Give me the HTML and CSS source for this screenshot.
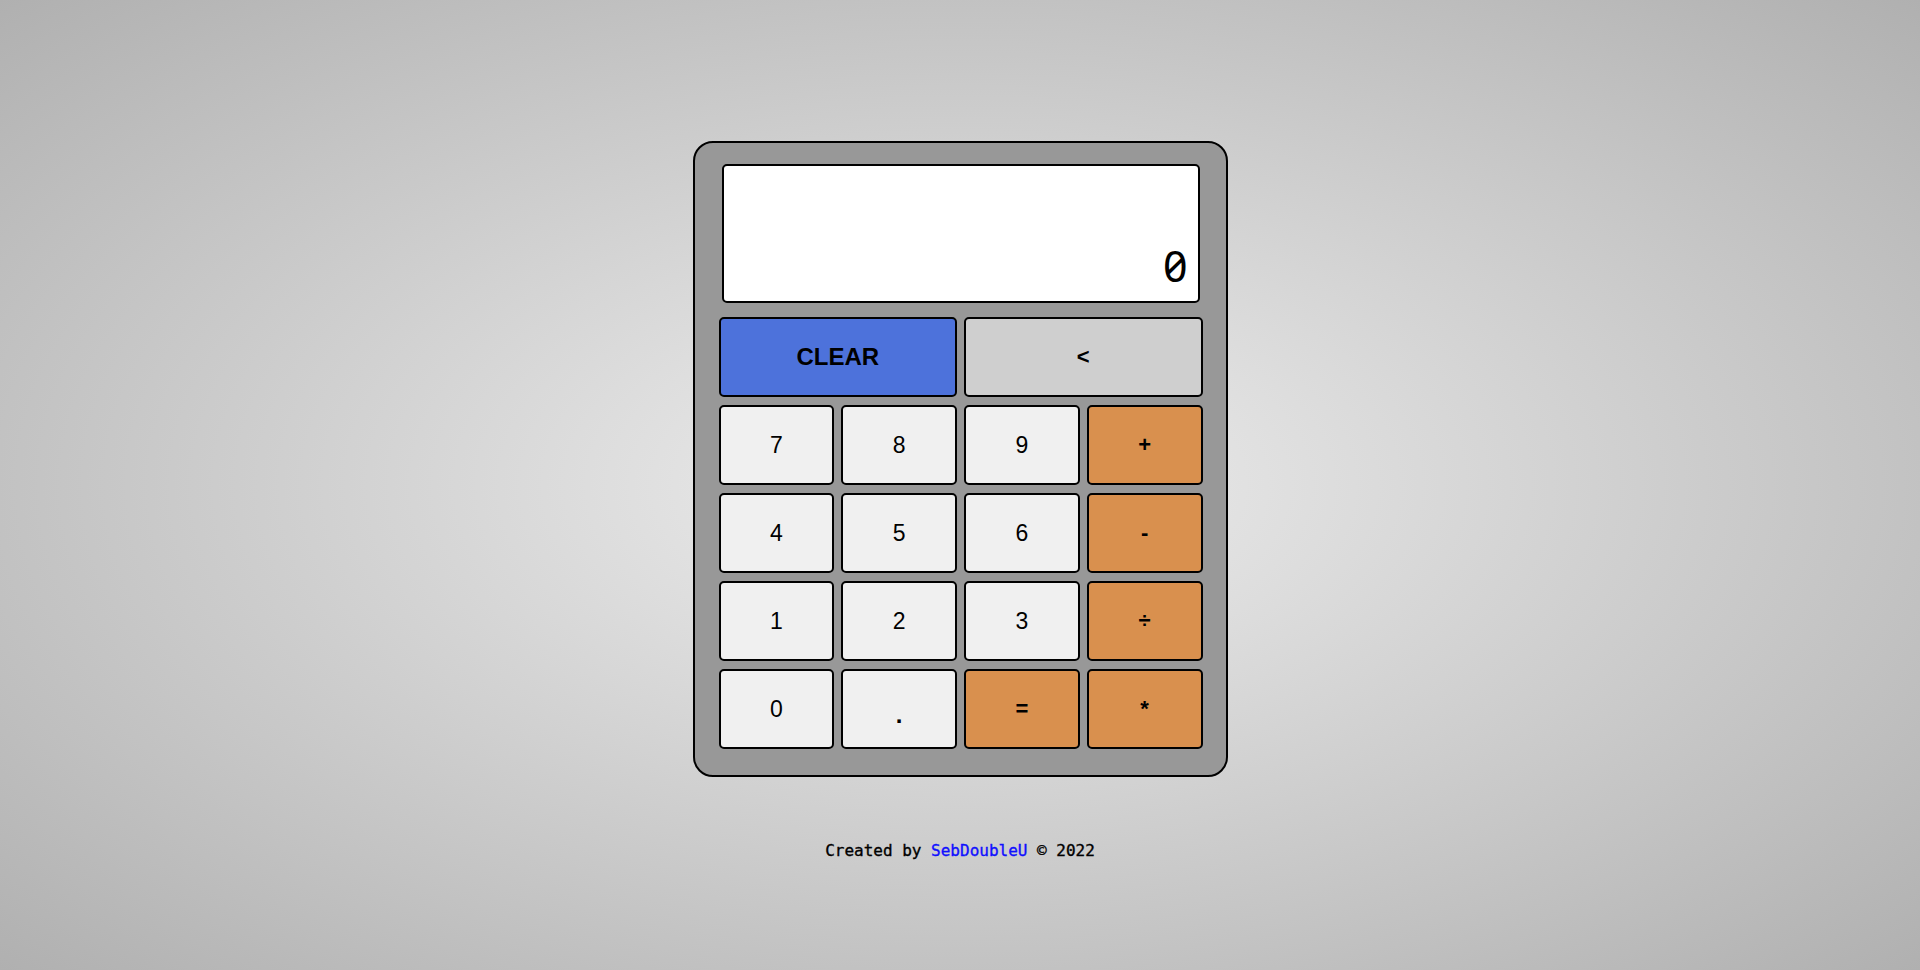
FILE: index.html
```html
<!DOCTYPE html>
<html lang="en">
<head>
<meta charset="utf-8">
<title>Calculator</title>
<link rel="stylesheet" href="styles.css">
</head>
<body>
<main class="page">
  <div class="calc">
    <div class="display"><span class="display-value">0</span></div>
    <div class="keys">
      <button class="key key-clear">CLEAR</button>
      <button class="key key-back">&lt;</button>
      <button class="key">7</button>
      <button class="key">8</button>
      <button class="key">9</button>
      <button class="key key-op">+</button>
      <button class="key">4</button>
      <button class="key">5</button>
      <button class="key">6</button>
      <button class="key key-op">-</button>
      <button class="key">1</button>
      <button class="key">2</button>
      <button class="key">3</button>
      <button class="key key-op">÷</button>
      <button class="key">0</button>
      <button class="key key-dot">.</button>
      <button class="key key-op">=</button>
      <button class="key key-op">*</button>
    </div>
  </div>
  <footer class="footer">Created by <a class="footer-link" href="#">SebDoubleU</a> © 2022</footer>
</main>
</body>
</html>
```
FILE: styles.css
```css
* { box-sizing: border-box; }
html, body {
  margin: 0;
  height: 100%;
}
body {
  background: radial-gradient(ellipse farthest-corner at center, #eeeeee 0%, #b0b0b0 100%);
  font-family: "Liberation Sans", Arial, sans-serif;
}
.page {
  display: flex;
  flex-direction: column;
  align-items: center;
  padding-top: 141px;
}
.calc {
  width: 535px;
  background: #989898;
  border: 2px solid #000;
  border-radius: 20px;
  padding: 21px 23px 26px 24px;
}
.display {
  margin: 0 3px 14px 3px;
  height: 139px;
  background: #fff;
  border: 2px solid #000;
  border-radius: 5px;
  display: flex;
  align-items: flex-end;
  justify-content: flex-end;
  padding: 0 10px 14px 0;
}
.display-value {
  font-family: "Noto Sans", "DejaVu Sans Mono", monospace;
  font-feature-settings: "zero" 1;
  font-size: 43px;
  line-height: 1;
  color: #000;
}
.keys {
  display: grid;
  grid-template-columns: repeat(4, 1fr);
  grid-auto-rows: 80px;
  column-gap: 7px;
  row-gap: 8px;
}
.key {
  margin: 0;
  padding: 0;
  border: 2px solid #000;
  border-radius: 5px;
  background: #f0f0f0;
  color: #000;
  font-family: "Liberation Sans", Arial, sans-serif;
  font-size: 23px;
  cursor: pointer;
}
.key-clear {
  grid-column: span 2;
  background: #4d72db;
  font-weight: bold;
  font-size: 24px;
}
.key-back {
  grid-column: span 2;
  background: #cfcfcf;
  font-weight: bold;
  font-size: 22px;
}
.key-op {
  background: #d9904e;
  font-weight: bold;
  font-size: 22px;
}
.key-dot {
  font-weight: bold;
  font-size: 24px;
  padding-top: 12px;
}
.footer {
  margin-top: 64px;
  font-family: "DejaVu Sans Mono", "Liberation Mono", monospace;
  font-size: 16px;
  color: #000;
  -webkit-text-stroke: 0.35px currentColor;
}
.footer-link {
  color: #1010ff;
  text-decoration: none;
}
```
